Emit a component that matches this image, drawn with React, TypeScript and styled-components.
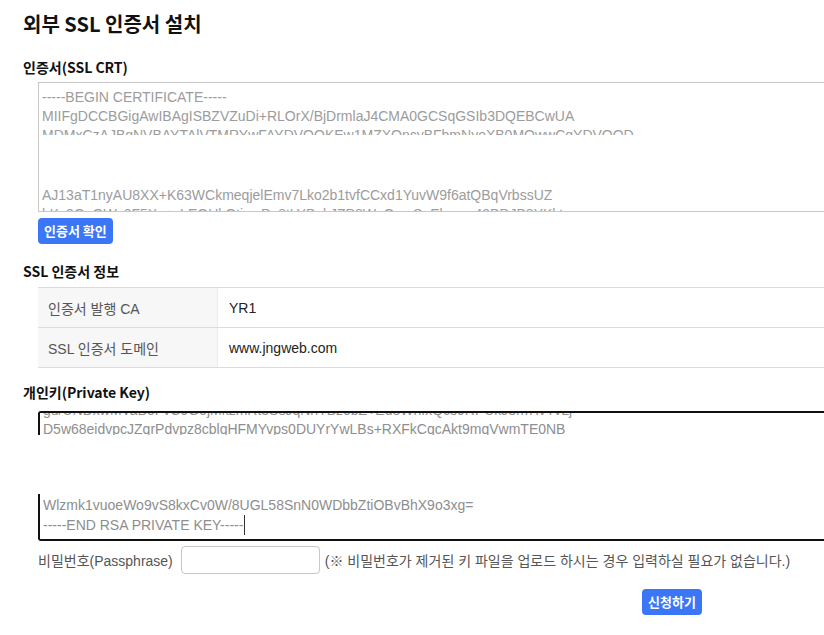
import React from "react";
import styled, { createGlobalStyle } from "styled-components";

const Global = createGlobalStyle`
  html, body { margin: 0; padding: 0; overflow: hidden; background: #fff; }
  body { font-family: "Noto Sans CJK KR", "Liberation Sans", sans-serif; color: #222; }
  * { box-sizing: border-box; }
`;

const Page = styled.div`
  padding: 10px 0 0 23px;
  width: 1400px;
`;

const Title = styled.h1`
  margin: 0;
  font-size: 20px;
  line-height: 28px;
  font-weight: 700;
  color: #111;
`;

const Heading = styled.h2<{ $mt: number }>`
  margin: ${(p) => p.$mt}px 0 0;
  font-size: 14px;
  line-height: 20px;
  font-weight: 700;
  color: #111;
`;

const Body = styled.div<{ $mt: number }>`
  margin: ${(p) => p.$mt}px 0 0 15px;
  width: 1268px;
`;

const CertBox = styled.div`
  border: 1px solid #c8c8c8;
  height: 130px;
  display: flex;
  flex-direction: column;
  background: #fff;
`;

const KeyBox = styled.div`
  border-top: 2px solid #111;
  border-right: 2px solid #111;
  border-bottom: 2px solid #111;
  border-top-left-radius: 3px;
  border-bottom-left-radius: 3px;
  height: 130px;
  display: flex;
  flex-direction: column;
  background: #fff;
`;

const Segment = styled.div<{ $h: number; $shift: number; $pad: number; $edge?: boolean }>`
  height: ${(p) => p.$h}px;
  overflow: hidden;
  padding-left: ${(p) => p.$pad}px;
  border-left: ${(p) => (p.$edge ? "2px solid #111" : "none")};
  flex-shrink: 0;
  & > div:first-child { margin-top: ${(p) => p.$shift}px; }
`;

const Gap = styled.div<{ $h: number }>`
  height: ${(p) => p.$h}px;
  flex-shrink: 0;
`;

const Line = styled.div<{ $tone: string }>`
  font-family: "Liberation Sans", Arial, sans-serif;
  font-size: 14px;
  line-height: 19px;
  color: ${(p) => p.$tone};
  white-space: pre;
`;

const Caret = styled.span`
  display: inline-block;
  width: 1px;
  height: 20px;
  background: #333;
  vertical-align: -5px;
  margin-left: 1px;
`;

const BlueButton = styled.button`
  height: 26px;
  padding: 0 6px;
  border: none;
  border-radius: 4px;
  background: #3b76f6;
  color: #fff;
  font-family: "Noto Sans CJK KR", sans-serif;
  font-weight: 700;
  font-size: 13px;
  line-height: 26px;
  cursor: pointer;
`;

const CheckButton = styled(BlueButton)`
  margin-top: 6px;
  display: block;
`;

const Table = styled.div`
  border-top: 1px solid #dcdcdc;
`;

const Row = styled.div`
  display: grid;
  grid-template-columns: 180px 1fr;
  height: 40px;
  border-bottom: 1px solid #dcdcdc;
`;

const LabelCell = styled.div`
  background: #f7f7f7;
  border-right: 1px solid #ececec;
  padding-left: 10px;
  display: flex;
  align-items: center;
  font-family: "Liberation Sans", "Noto Sans CJK KR", sans-serif;
  font-size: 14px;
  color: #555;
`;

const ValueCell = styled.div`
  padding-left: 11px;
  display: flex;
  align-items: center;
  font-family: "Liberation Sans", "Noto Sans CJK KR", sans-serif;
  font-size: 14px;
  color: #222;
`;

const PassRow = styled.div`
  margin-top: 5px;
  display: flex;
  align-items: center;
  font-family: "Liberation Sans", "Noto Sans CJK KR", sans-serif;
  font-size: 14px;
  color: #555;
`;

const PassLabel = styled.span`
  margin-right: 8px;
`;

const PassInput = styled.input`
  width: 139px;
  height: 28px;
  border: 1px solid #c8c8c8;
  border-radius: 4px;
  outline: none;
  margin-right: 5px;
  padding: 0 6px;
`;

const SubmitRow = styled.div`
  margin-top: 15px;
  display: flex;
  justify-content: center;
`;

const CERT_GRAY = "#9c9c9c";
const KEY_GRAY = "#8e8e8e";

export default function App() {
  return (
    <>
      <Global />
      <Page>
        <Title>외부 SSL 인증서 설치</Title>

        <Heading $mt={19}>인증서(SSL CRT)</Heading>
        <Body $mt={5}>
          <CertBox>
            <Segment $h={52} $shift={5} $pad={3}>
              <Line $tone={CERT_GRAY}>-----BEGIN CERTIFICATE-----</Line>
              <Line $tone={CERT_GRAY}>MIIFgDCCBGigAwIBAgISBZVZuDi+RLOrX/BjDrmlaJ4CMA0GCSqGSIb3DQEBCwUA</Line>
              <Line $tone={CERT_GRAY}>MDMxCzAJBgNVBAYTAlVTMRYwFAYDVQQKEw1MZXQncyBFbmNyeXB0MQwwCgYDVQQD</Line>
            </Segment>
            <Gap $h={51} />
            <Segment $h={25} $shift={0} $pad={3}>
              <Line $tone={CERT_GRAY}>AJ13aT1nyAU8XX+K63WCkmeqjelEmv7Lko2b1tvfCCxd1YuvW9f6atQBqVrbssUZ</Line>
              <Line $tone={CERT_GRAY}>hKz3QnGWz0F5Xx+aLEGHkGtiqwPo8tLYBnkJZP8WeQcmSuEbmnn40BDJB8YKkt</Line>
            </Segment>
          </CertBox>
          <CheckButton type="button">인증서 확인</CheckButton>
        </Body>

        <Heading $mt={17}>SSL 인증서 정보</Heading>
        <Body $mt={6}>
          <Table>
            <Row>
              <LabelCell>인증서 발행 CA</LabelCell>
              <ValueCell>YR1</ValueCell>
            </Row>
            <Row>
              <LabelCell>SSL 인증서 도메인</LabelCell>
              <ValueCell>www.jngweb.com</ValueCell>
            </Row>
          </Table>
        </Body>

        <Heading $mt={14}>개인키(Private Key)</Heading>
        <Body $mt={9}>
          <KeyBox>
            <Segment $h={22} $shift={-12} $pad={3} $edge>
              <Line $tone={KEY_GRAY}>gu/UNDxwMVaBoFvC9G0jMkzmRt3SsJqNnTBz0bZ+Ed8WnfxQcs9RPUkJ3m7lvYvLj</Line>
              <Line $tone={KEY_GRAY}>D5w68eidvpcJZqrPdvpz8cblqHFMYvps0DUYrYwLBs+RXFkCqcAkt9mqVwmTE0NB</Line>
            </Segment>
            <Gap $h={59} />
            <Segment $h={45} $shift={-17} $pad={3} $edge>
              <Line $tone={KEY_GRAY}>j,   q  g     p       y          j       g    p</Line>
              <Line $tone={KEY_GRAY}>Wlzmk1vuoeWo9vS8kxCv0W/8UGL58SnN0WDbbZtiOBvBhX9o3xg=</Line>
              <Line $tone={KEY_GRAY}>
                -----END RSA PRIVATE KEY-----
                <Caret />
              </Line>
            </Segment>
          </KeyBox>
          <PassRow>
            <PassLabel>비밀번호(Passphrase)</PassLabel>
            <PassInput type="password" />
            <span>(※ 비밀번호가 제거된 키 파일을 업로드 하시는 경우 입력하실 필요가 없습니다.)</span>
          </PassRow>
          <SubmitRow>
            <BlueButton type="button">신청하기</BlueButton>
          </SubmitRow>
        </Body>
      </Page>
    </>
  );
}
